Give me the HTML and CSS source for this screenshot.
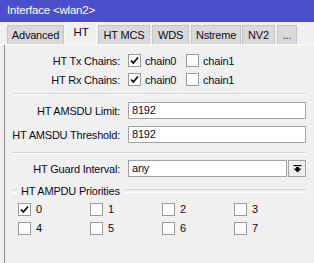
FILE: index.html
```html
<!DOCTYPE html>
<html>
<head>
<meta charset="utf-8">
<link rel="stylesheet" href="styles.css">
</head>
<body>
<div class="titlebar">Interface &lt;wlan2&gt;</div>
<div class="tabs">
  <div class="tab tab-adv">Advanced</div>
  <div class="tab tab-ht active">HT</div>
  <div class="tab tab-mcs">HT MCS</div>
  <div class="tab tab-wds">WDS</div>
  <div class="tab tab-ns">Nstreme</div>
  <div class="tab tab-nv2">NV2</div>
  <div class="tab tab-more">...</div>
</div>
<div class="panel">
  <div class="form sec-chains">
    <div class="label">HT Tx Chains:</div>
    <div class="checks">
      <span class="chk"><span class="box"><svg viewBox="0 0 11 11" width="11" height="11"><polyline points="2,5.5 4.3,8 9,2.5" fill="none" stroke="#000" stroke-width="1.7"/></svg></span>chain0</span>
      <span class="chk"><span class="box"></span>chain1</span>
    </div>
    <div class="label">HT Rx Chains:</div>
    <div class="checks">
      <span class="chk"><span class="box"><svg viewBox="0 0 11 11" width="11" height="11"><polyline points="2,5.5 4.3,8 9,2.5" fill="none" stroke="#000" stroke-width="1.7"/></svg></span>chain0</span>
      <span class="chk"><span class="box"></span>chain1</span>
    </div>
  </div>
  <div class="sep"></div>
  <div class="form sec-amsdu">
    <div class="label">HT AMSDU Limit:</div>
    <div class="input">8192</div>
    <div class="label">HT AMSDU Threshold:</div>
    <div class="input">8192</div>
  </div>
  <div class="sep sep2"></div>
  <div class="form sec-guard">
    <div class="label">HT Guard Interval:</div>
    <div class="combo">
      <div class="input grow">any</div>
      <div class="dropbtn"><svg width="9" height="8" viewBox="0 0 9 8"><rect x="0.5" y="0" width="8" height="1.2" fill="#000"/><rect x="3" y="2" width="3" height="2" fill="#000"/><polygon points="0.5,3.6 8.5,3.6 4.5,7.6" fill="#000"/></svg></div>
    </div>
  </div>
  <div class="group-head"><span class="group-title">HT AMPDU Priorities</span></div>
  <div class="prio">
    <span class="chk"><span class="box"><svg viewBox="0 0 11 11" width="11" height="11"><polyline points="2,5.5 4.3,8 9,2.5" fill="none" stroke="#000" stroke-width="1.7"/></svg></span>0</span>
    <span class="chk"><span class="box"></span>1</span>
    <span class="chk"><span class="box"></span>2</span>
    <span class="chk"><span class="box"></span>3</span>
    <span class="chk"><span class="box"></span>4</span>
    <span class="chk"><span class="box"></span>5</span>
    <span class="chk"><span class="box"></span>6</span>
    <span class="chk"><span class="box"></span>7</span>
  </div>
</div>
</body>
</html>
```
FILE: styles.css
```css
* { box-sizing: border-box; }
html, body { margin: 0; padding: 0; }
body {
  width: 314px;
  height: 263px;
  overflow: hidden;
  background: #f0f0f0;
  font-family: "Liberation Sans", Arial, sans-serif;
  font-size: 11px;
  letter-spacing: -0.2px;
  color: #0a0a1e;
}
.titlebar {
  height: 22px;
  background: #4c4fcd;
  color: #fff;
  padding-left: 7px;
  line-height: 21px;
  font-size: 11.5px;
}
.tabs {
  height: 23px;
  display: flex;
  align-items: flex-end;
  padding-left: 7px;
  gap: 1px;
  border-bottom: 1px solid #fafafa;
}
.tab {
  height: 19px;
  background: #d9d9d9;
  border: 1px solid #c4c4c4;
  border-bottom: none;
  text-align: center;
  line-height: 19px;
  white-space: nowrap;
}
.tab.active {
  height: 22px;
  background: #f0f0f0;
  border-color: #fcfcfc;
  line-height: 19px;
  font-size: 11.5px;
}
.tab-adv { width: 57px; }
.tab-ht { width: 32px; }
.tab-mcs { width: 52px; }
.tab-wds { width: 37px; margin-left: 1px; }
.tab-ns { width: 50px; margin-left: 1px; }
.tab-nv2 { width: 33px; }
.tab-more { width: 20px; margin-left: 1px; }
.panel {
  margin-left: 4px;
  border-left: 1px solid #8c8c8c;
  height: 218px;
  padding-right: 8px;
}
.form {
  display: grid;
  grid-template-columns: 115px 1fr;
  column-gap: 8px;
  align-items: center;
}
.label { text-align: right; white-space: nowrap; }
.sec-chains { padding-top: 6px; grid-auto-rows: 19px; }
.checks { display: flex; }
.chk { display: inline-flex; align-items: center; gap: 4px; white-space: nowrap; }
.checks .chk { width: 58px; }
.box {
  width: 13px;
  height: 13px;
  background: #fff;
  border: 1px solid #9a9a9a;
  display: inline-flex;
  align-items: center;
  justify-content: center;
  flex: none;
}
.sep {
  margin: 4px 0 0 8px;
  height: 2px;
  border-top: 1px solid #d4d4d4;
  border-bottom: 1px solid #fff;
}
.sec-amsdu { padding-top: 7px; row-gap: 7px; }
.input {
  height: 17px;
  background: #fff;
  border: 1px solid #a3a3a3;
  padding-left: 3px;
  line-height: 15px;
}
.sep2 { margin-top: 9px; }
.sec-guard { padding-top: 6px; }
.combo { display: flex; gap: 1px; }
.grow { flex: 1; }
.dropbtn {
  width: 18px;
  height: 17px;
  border: 1px solid #a3a3a3;
  background: #f0f0f0;
  display: flex;
  align-items: center;
  justify-content: center;
}
.group-head {
  display: flex;
  align-items: center;
  margin: 8px 0 0 7px;
  height: 12px;
  gap: 4px;
}
.group-head::before {
  content: "";
  width: 5px;
  height: 2px;
  border-top: 1px solid #d4d4d4;
  border-bottom: 1px solid #fff;
}
.group-head::after {
  content: "";
  flex: 1;
  height: 2px;
  border-top: 1px solid #d4d4d4;
  border-bottom: 1px solid #fff;
}
.group-title { font-size: 11px; }
.prio {
  display: grid;
  grid-template-columns: repeat(4, 72px);
  grid-auto-rows: 19px;
  padding: 6px 0 0 13px;
}
.prio .chk { gap: 5px; align-items: flex-start; line-height: 13px; }
```
